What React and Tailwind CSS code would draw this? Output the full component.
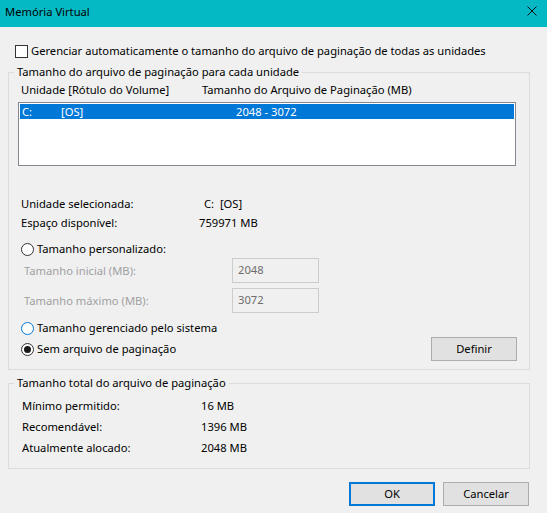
import { useState } from 'react';

function Radio({ checked, hover, onClick, label }) {
  return (
    <label className="flex items-center cursor-default" onClick={onClick}>
      <span
        className={
          'flex h-[13px] w-[13px] items-center justify-center rounded-full border bg-white ' +
          (hover ? 'border-[#0078d7]' : 'border-[#333333]')
        }
      >
        {checked && <span className="h-[7px] w-[7px] rounded-full bg-[#1a1a1a]" />}
      </span>
      <span className="ml-[3px]">{label}</span>
    </label>
  );
}

function Button({ children, primary }) {
  return (
    <button
      className={
        'flex h-[24px] w-[86px] items-center justify-center bg-[#e1e1e1] ' +
        (primary ? 'border-2 border-[#0078d7]' : 'border border-[#adadad]')
      }
    >
      {children}
    </button>
  );
}

function DisabledField({ label, value }) {
  return (
    <div className="flex items-center">
      <span className="w-[223px] pl-[15px] text-[#a0a0a0]">{label}</span>
      <div className="h-[25px] w-[87px] border border-[#cccccc] bg-[#f0f0f0] pl-[5px] pt-[3px] text-[#6d6d6d]">
        {value}
      </div>
    </div>
  );
}

export default function App() {
  const [mode, setMode] = useState('none');
  const [auto, setAuto] = useState(false);

  return (
    <div className="flex h-[513px] w-[547px] flex-col bg-[#f0f0f0] font-['Noto_Sans',sans-serif] text-[11.2px] leading-[16px] text-black">
      <div className="flex h-[27px] items-start justify-between bg-[#04b8c4]">
        <span className="pl-[5px] pt-[4px]">Memória Virtual</span>
        <svg className="mr-[10px] mt-[6px]" width="10" height="10" viewBox="0 0 10 10">
          <path d="M0.5 0.5L9.5 9.5M9.5 0.5L0.5 9.5" stroke="#111" strokeWidth="1" />
        </svg>
      </div>

      <label className="ml-[15px] mt-[16px] flex items-center" onClick={() => setAuto(!auto)}>
        <span className="flex h-[13px] w-[13px] items-center justify-center border border-[#333333] bg-white">
          {auto && (
            <svg width="9" height="9" viewBox="0 0 9 9">
              <path d="M1 4.5L3.5 7L8 1.5" stroke="#000" strokeWidth="1.3" fill="none" />
            </svg>
          )}
        </span>
        <span className="ml-[3px]">Gerenciar automaticamente o tamanho do arquivo de paginação de todas as unidades</span>
      </label>

      <div className="relative ml-[8px] mt-[13px] h-[298px] w-[522px] border border-[#dcdcdc]">
        <span className="absolute left-[5px] top-[-9px] bg-[#f0f0f0] px-[3px]">
          Tamanho do arquivo de paginação para cada unidade
        </span>

        <div className="flex pl-[12px] pt-[9px]">
          <span className="w-[181px]">Unidade [Rótulo do Volume]</span>
          <span>Tamanho do Arquivo de Paginação (MB)</span>
        </div>

        <div className="ml-[9px] mt-[4px] h-[64px] w-[498px] border border-[#828790] bg-white p-[1px]">
          <div className="flex h-[15px] items-center bg-[#0078d7] text-white">
            <span className="w-[41px] pl-[2px]">C:</span>
            <span className="w-[175px]">[OS]</span>
            <span>2048 - 3072</span>
          </div>
        </div>

        <div className="mt-[30px] flex pl-[12px]">
          <span className="w-[183px]">Unidade selecionada:</span>
          <span>C:&nbsp;&nbsp;[OS]</span>
        </div>
        <div className="mt-[3px] flex pl-[12px]">
          <span className="w-[178px]">Espaço disponível:</span>
          <span>759971 MB</span>
        </div>

        <div className="mt-[10px] pl-[12px]">
          <Radio label="Tamanho personalizado:" checked={mode === 'custom'} onClick={() => setMode('custom')} />
        </div>
        <div className="mt-[1px] flex flex-col gap-[5px]">
          <DisabledField label="Tamanho inicial (MB):" value="2048" />
          <DisabledField label="Tamanho máximo (MB):" value="3072" />
        </div>

        <div className="mt-[7px] pl-[12px]">
          <Radio label="Tamanho gerenciado pelo sistema" hover checked={mode === 'system'} onClick={() => setMode('system')} />
        </div>
        <div className="mt-[1px] flex items-center justify-between pl-[12px] pr-[12px]">
          <Radio label="Sem arquivo de paginação" checked={mode === 'none'} onClick={() => setMode('none')} />
          <Button>Definir</Button>
        </div>
      </div>

      <div className="relative ml-[8px] mt-[13px] h-[86px] w-[522px] border border-[#dcdcdc]">
        <span className="absolute left-[5px] top-[-9px] bg-[#f0f0f0] px-[3px]">
          Tamanho total do arquivo de paginação
        </span>
        <div className="flex flex-col gap-[5px] pl-[13px] pt-[14px]">
          <div className="flex">
            <span className="w-[179px]">Mínimo permitido:</span>
            <span>16 MB</span>
          </div>
          <div className="flex">
            <span className="w-[179px]">Recomendável:</span>
            <span>1396 MB</span>
          </div>
          <div className="flex">
            <span className="w-[179px]">Atualmente alocado:</span>
            <span>2048 MB</span>
          </div>
        </div>
      </div>

      <div className="mr-[18px] mt-[13px] flex justify-end gap-[8px]">
        <Button primary>OK</Button>
        <Button>Cancelar</Button>
      </div>
    </div>
  );
}
